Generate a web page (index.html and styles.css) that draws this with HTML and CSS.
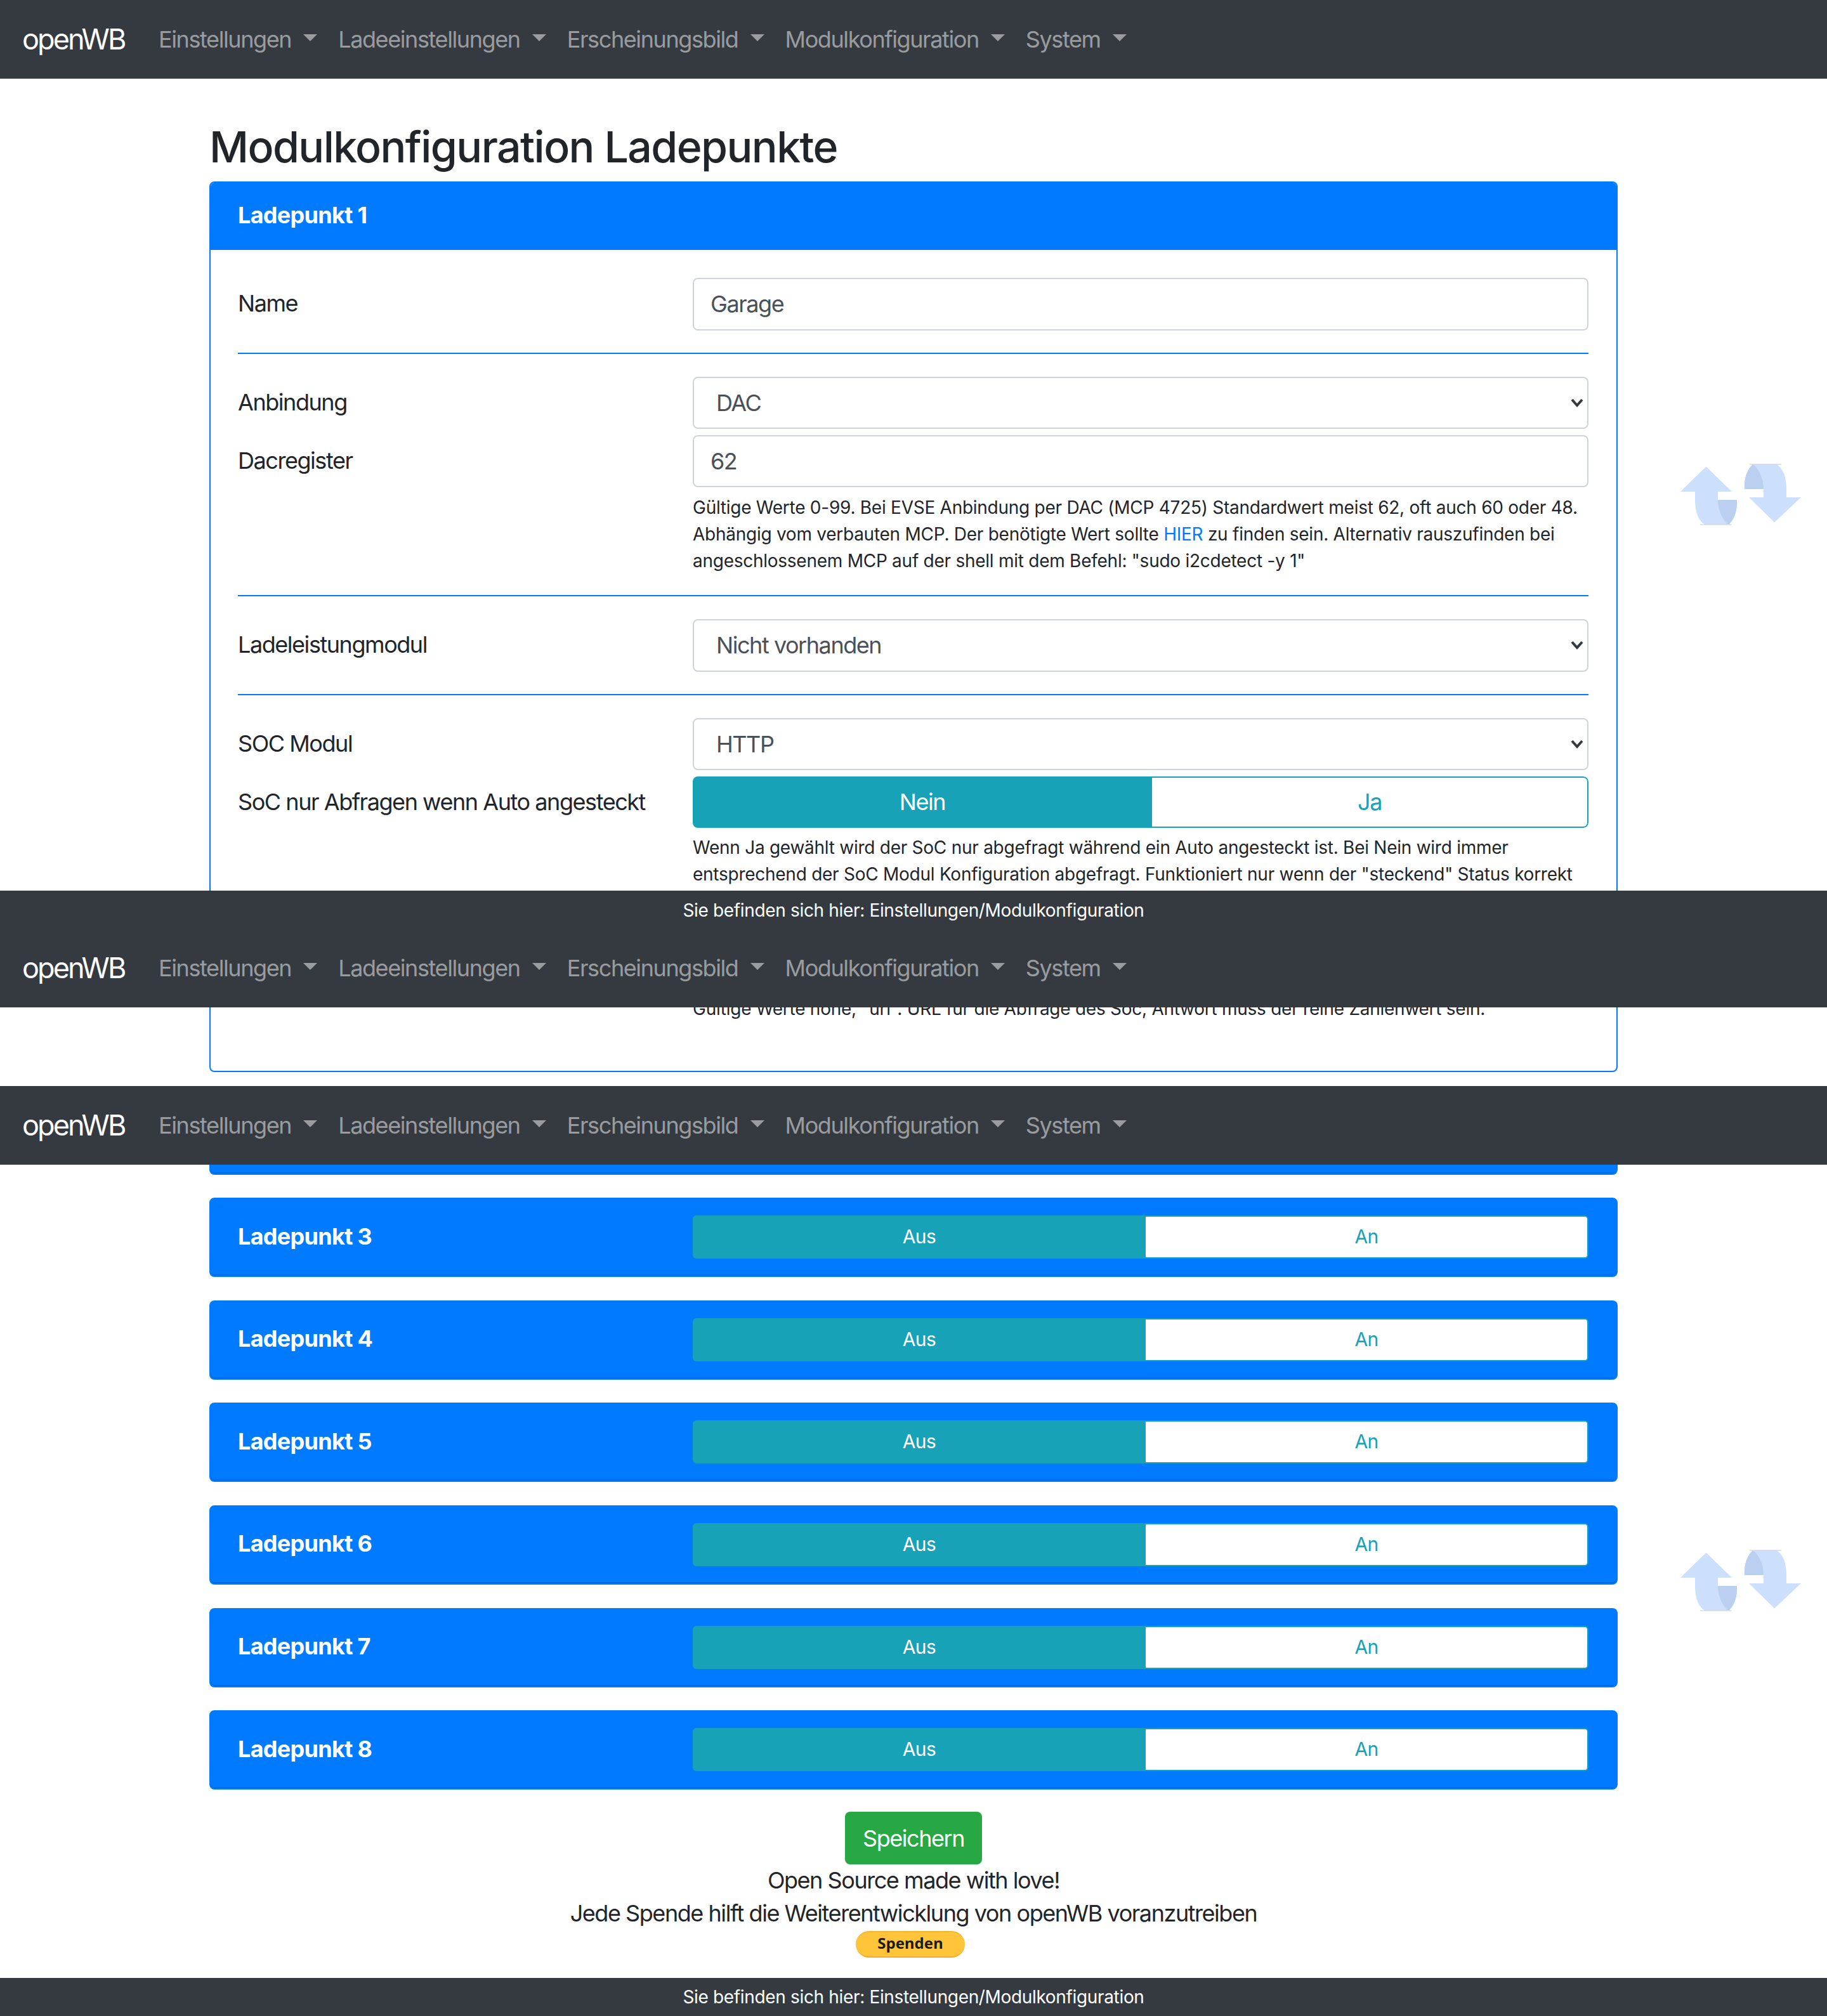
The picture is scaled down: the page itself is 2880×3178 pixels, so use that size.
FILE: index.html
```html
<!DOCTYPE html>
<html lang="de">
<head>
<meta charset="utf-8">
<title>openWB</title>
<link rel="stylesheet" href="styles.css">
</head>
<body>
<svg class="defs" width="0" height="0">
  <symbol id="arrows" viewBox="0 0 280 150">
    <path class="arrow-light" d="M89.500 35.500 130 75h-22v13h30c1 16-4 31-13 39H87C76 119 72 105 72 88V75H49Z"/>
    <path class="arrow-dark" d="M108 88h30c1 16-4 31-13 39-9-6-17-22-17-39Z"/>
    <path class="arrow-edge" d="M80 127h50"/>
    <path class="arrow-light" d="M197 123.500 157 84h23V71h-30c-1-16 4-31 13-39h38c11 8 15 22 15 39v13h23Z"/>
    <path class="arrow-dark" d="M180 71h-30c-1-16 4-31 13-39 9 6 17 22 17 39Z"/>
    <path class="arrow-edge" d="M158 32h50"/>
  </symbol>
</svg>

<nav class="navbar">
  <a class="brand">openWB</a>
  <a class="nav-link">Einstellungen<i class="caret"></i></a>
  <a class="nav-link">Ladeeinstellungen<i class="caret"></i></a>
  <a class="nav-link">Erscheinungsbild<i class="caret"></i></a>
  <a class="nav-link">Modulkonfiguration<i class="caret"></i></a>
  <a class="nav-link">System<i class="caret"></i></a>
</nav>

<main class="container">
  <h1 class="title">Modulkonfiguration Ladepunkte</h1>

  <section class="card open">
    <header class="card-head">Ladepunkt 1</header>
    <div class="card-body">
      <div class="group">
        <div class="row"><label class="lbl">Name</label><input class="field" value="Garage"></div>
      </div>
      <hr class="sep">
      <div class="group">
        <div class="row"><label class="lbl">Anbindung</label><div class="select-wrap"><select class="field select"><option>DAC</option></select><svg class="chev" viewBox="0 0 20 14"><path d="M2 2l8 9 8-9" /></svg></div></div>
        <div class="row"><label class="lbl">Dacregister</label><div><input class="field" value="62">
          <p class="help">Gültige Werte 0-99. Bei EVSE Anbindung per DAC (MCP 4725) Standardwert meist 62, oft auch 60 oder 48. Abhängig vom verbauten MCP. Der benötigte Wert sollte <a class="link">HIER</a> zu finden sein. Alternativ rauszufinden bei angeschlossenem MCP auf der shell mit dem Befehl: "sudo i2cdetect -y 1"</p></div></div>
      </div>
      <hr class="sep">
      <div class="group">
        <div class="row"><label class="lbl">Ladeleistungmodul</label><div class="select-wrap"><select class="field select"><option>Nicht vorhanden</option></select><svg class="chev" viewBox="0 0 20 14"><path d="M2 2l8 9 8-9" /></svg></div></div>
      </div>
      <hr class="sep">
      <div class="group">
        <div class="row"><label class="lbl">SOC Modul</label><div class="select-wrap"><select class="field select"><option>HTTP</option></select><svg class="chev" viewBox="0 0 20 14"><path d="M2 2l8 9 8-9" /></svg></div></div>
        <div class="row"><label class="lbl">SoC nur Abfragen wenn Auto angesteckt</label><div>
          <div class="toggle"><span class="on on-nein">Nein</span><span class="off">Ja</span></div>
          <p class="help">Wenn Ja gewählt wird der SoC nur abgefragt während ein Auto angesteckt ist. Bei Nein wird immer entsprechend der SoC Modul Konfiguration abgefragt. Funktioniert nur wenn der "steckend" Status korrekt angezeigt wird.</p></div></div>
        <div class="row row-url"><label class="lbl">SoC Abfrage URL</label><div><input class="field" value="none">
          <p class="help">Gültige Werte none, "url". URL für die Abfrage des Soc, Antwort muss der reine Zahlenwert sein.</p></div></div>
      </div>
    </div>
  </section>

  <section class="card closed"><div class="lbl-head">Ladepunkt 2</div><div class="toggle small"><span class="on">Aus</span><span class="off">An</span></div></section>
  <section class="card closed"><div class="lbl-head">Ladepunkt 3</div><div class="toggle small"><span class="on">Aus</span><span class="off">An</span></div></section>
  <section class="card closed"><div class="lbl-head">Ladepunkt 4</div><div class="toggle small"><span class="on">Aus</span><span class="off">An</span></div></section>
  <section class="card closed"><div class="lbl-head">Ladepunkt 5</div><div class="toggle small"><span class="on">Aus</span><span class="off">An</span></div></section>
  <section class="card closed"><div class="lbl-head">Ladepunkt 6</div><div class="toggle small"><span class="on">Aus</span><span class="off">An</span></div></section>
  <section class="card closed"><div class="lbl-head">Ladepunkt 7</div><div class="toggle small"><span class="on">Aus</span><span class="off">An</span></div></section>
  <section class="card closed last"><div class="lbl-head">Ladepunkt 8</div><div class="toggle small"><span class="on">Aus</span><span class="off">An</span></div></section>

  <div class="actions">
    <button class="save">Speichern</button>
    <p class="love">Open Source made with love!</p>
    <p class="love">Jede Spende hilft die Weiterentwicklung von openWB voranzutreiben</p>
    <a class="donate">Spenden</a>
  </div>
</main>

<footer class="foot">Sie befinden sich hier: Einstellungen/Modulkonfiguration</footer>

<!-- Fixed bars and scroll buttons captured over the content by the scrolling screenshot -->
<div class="stitch stitch-a">
  <div class="foot">Sie befinden sich hier: Einstellungen/Modulkonfiguration</div>
  <nav class="navbar">
    <a class="brand">openWB</a>
    <a class="nav-link">Einstellungen<i class="caret"></i></a>
    <a class="nav-link">Ladeeinstellungen<i class="caret"></i></a>
    <a class="nav-link">Erscheinungsbild<i class="caret"></i></a>
    <a class="nav-link">Modulkonfiguration<i class="caret"></i></a>
    <a class="nav-link">System<i class="caret"></i></a>
  </nav>
</div>
<div class="stitch stitch-b">
  <nav class="navbar">
    <a class="brand">openWB</a>
    <a class="nav-link">Einstellungen<i class="caret"></i></a>
    <a class="nav-link">Ladeeinstellungen<i class="caret"></i></a>
    <a class="nav-link">Erscheinungsbild<i class="caret"></i></a>
    <a class="nav-link">Modulkonfiguration<i class="caret"></i></a>
    <a class="nav-link">System<i class="caret"></i></a>
  </nav>
</div>
<svg class="scroll-arrows first"><use href="#arrows"/></svg>
<svg class="scroll-arrows second"><use href="#arrows"/></svg>
</body>
</html>
```

FILE: styles.css
```css
* { box-sizing: border-box; }
html, body { margin: 0; padding: 0; }
body {
  position: relative;
  height: 3178px;
  overflow: hidden;
  background: #fff;
  color: #212529;
  font-family: Inter, "Liberation Sans", sans-serif;
  font-size: 36px;
  line-height: 54px;
  letter-spacing: -1.45px;
}
.defs { position: absolute; }

.navbar {
  display: flex;
  align-items: center;
  height: 124px;
  padding-left: 35px;
  background: #343a40;
}
.brand { color: #fff; font-size: 45px; width: 215px; letter-spacing: -2.9px; }
.nav-link { display: flex; align-items: center; color: rgba(255,255,255,.5); margin-right: 33px; letter-spacing: -1.4px; }
.caret {
  margin-left: 19px;
  margin-top: -6px;
  border-top: 11px solid rgba(255,255,255,.5);
  border-left: 11px solid transparent;
  border-right: 11px solid transparent;
}

.container { width: 2220px; margin: 0 auto; }
.title {
  margin: 0;
  padding-top: 66px;
  height: 162px;
  font-size: 68px;
  line-height: 82px;
  font-weight: 500;
  letter-spacing: -1.6px;
}

.card { border: 2px solid #007bff; border-radius: 8px; margin-bottom: 36.6px; }
.card.open { height: 1404px; overflow: hidden; }
.card-head {
  height: 106px;
  padding: 0 43px;
  line-height: 102px;
  background: #007bff;
  color: #fff;
  font-weight: 700;
  letter-spacing: -0.7px;
}
.card-body { padding: 44px 44px 0 43px; }
.group { display: flex; flex-direction: column; gap: 9.6px; }
.row { display: grid; grid-template-columns: 717px 1fr; align-items: start; }
.row-url { margin-top: 27px; }
.lbl { line-height: 81px; }
.sep { margin: 35px 0 36px; border: 0; border-top: 2px solid #007bff; }

.field {
  display: block;
  width: 100%;
  height: 82.6px;
  padding: 0 26px;
  border: 2px solid #ced4da;
  border-radius: 8px;
  background: #fff;
  color: #495057;
  font: inherit;
  letter-spacing: inherit;
}
.select { appearance: none; padding-left: 35px; }
.select-wrap { position: relative; }
.chev { position: absolute; right: 8px; top: 34px; width: 20px; height: 14px; }
.chev path { fill: none; stroke: #343a40; stroke-width: 4; }

.help { margin: 12px 0 -2px; font-size: 28px; line-height: 41.6px; letter-spacing: -0.26px; color: #212529; }
.link { color: #007bff; }

.toggle {
  display: grid;
  grid-template-columns: 724px 1fr;
  height: 81.5px;
  margin-bottom: -1px;
  border-radius: 8px;
  overflow: hidden;
  text-align: center;
  line-height: 76px;
}
.on { background: #17a2b8; color: #fff; line-height: 80px; }
.off { background: #fff; color: #17a2b8; border: 2px solid #17a2b8; border-left: 0; border-radius: 0 8px 8px 0; }

.closed {
  display: grid;
  grid-template-columns: 717px 1fr;
  align-items: center;
  height: 125px;
  padding: 0 44px 1px 43px;
  background: #007bff;
  border-radius: 8px;
  box-shadow: inset 0 -2px 0 #006bdf;
  color: #fff;
  font-weight: 700;
  letter-spacing: -0.7px;
}
.lbl-head { margin-bottom: 3px; }
.closed .toggle {
  height: 68px;
  margin-bottom: 0;
  grid-template-columns: 714px 1fr;
  font-size: 30px;
  font-weight: 400;
  line-height: 62px;
  border-radius: 6px;
  letter-spacing: -0.6px;
}
.closed .on { line-height: 66px; }
.closed .off { border-radius: 0 6px 6px 0; }
.card.last { margin-bottom: 35px; }

.actions { display: flex; flex-direction: column; align-items: center; }
.save {
  width: 216px;
  height: 83px;
  margin-bottom: -1.500px;
  border: 0;
  border-radius: 8px;
  background: #28a745;
  color: #fff;
  font: inherit;
  letter-spacing: inherit;
}
.love { margin: 0; line-height: 52px; }
.donate {
  width: 172px;
  height: 42px;
  margin: 2.500px 0 0 -10px;
  border-radius: 21px;
  background: #ffc439;
  border-top: 2px solid #f5b62e;
  border-bottom: 2px solid #f0ae2a;
  color: #1a1a1a;
  font-family: "Open Sans", sans-serif;
  font-size: 24px;
  font-weight: 700;
  line-height: 34px;
  letter-spacing: 0;
  text-align: center;
}

.foot {
  height: 60px;
  background: #343a40;
  color: #fff;
  text-align: center;
  font-size: 28px;
  line-height: 60px;
  letter-spacing: -0.34px;
}
body > .foot { position: absolute; left: 0; right: 0; bottom: 0; }

.stitch { position: absolute; left: 0; right: 0; }
.stitch-a { top: 1404px; }
.stitch-a .foot { line-height: 62px; }
.stitch-b { top: 1712px; }

.scroll-arrows { position: absolute; right: 0; width: 280px; height: 150px; }
.scroll-arrows.first { top: 700px; }
.scroll-arrows.second { top: 2412px; }
.arrow-light { fill: #cce0fd; }
.arrow-dark { fill: #bbcff0; }
.arrow-edge { fill: none; stroke: #d4d9e2; stroke-width: 1.500; }
```
